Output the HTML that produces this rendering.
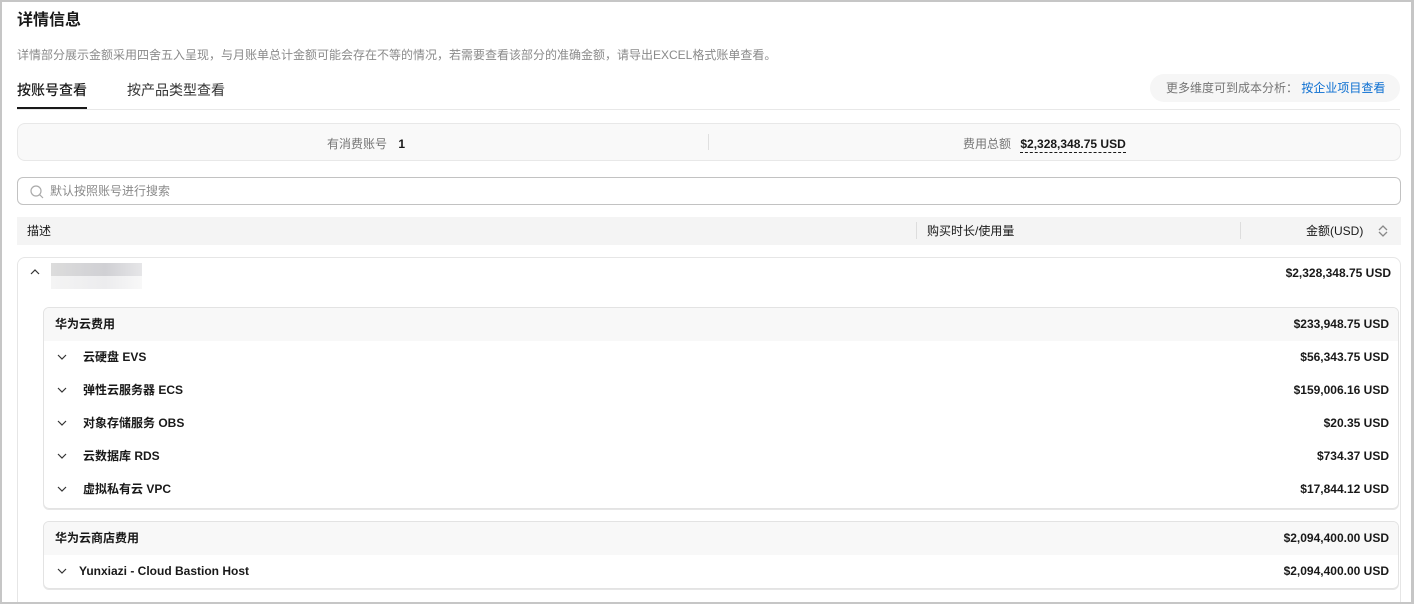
<!DOCTYPE html>
<html><head><meta charset="utf-8"><style>
*{box-sizing:border-box;margin:0;padding:0}
html,body{width:1414px;height:604px;overflow:hidden;background:#fff}
body{font-family:"Liberation Sans","Noto Sans CJK SC",sans-serif;color:#191919;position:relative}
.frame{position:absolute;left:0;top:0;width:1414px;height:604px;border:2px solid #c6c6c6;border-right-width:3px;pointer-events:none;z-index:5}
.abs{position:absolute}
.title{left:17px;top:10px;font-size:16px;font-weight:bold;line-height:22px}
.desc{left:17px;top:46px;font-size:12px;color:#8a8a8a;line-height:18px}
.tab{top:80px;font-size:14px;line-height:20px}
.ul{left:17px;top:107px;width:70px;height:3px;background:#191919}
.div{left:17px;top:109px;width:1383px;height:1px;background:#e8e8e8}
.pill{left:1150px;top:74px;width:250px;height:28px;border-radius:14px;background:#f6f6f6;font-size:12px;color:#757575;line-height:28px;padding-left:16px}
.pill span{color:#0a6ed1}
.sum{left:17px;top:123px;width:1384px;height:38px;border:1px solid #e8e8e8;border-radius:8px;background:#f9f9f9;font-size:12px;color:#757575}
.search{left:17px;top:177px;width:1384px;height:28px;border:1px solid #c2c2c2;border-radius:6px;font-size:12px;color:#8a8a8a;line-height:26px;padding-left:32px}
.th{left:17px;top:217px;width:1384px;height:28px;background:#f4f4f4;font-size:12px;line-height:28px;color:#191919}
.card{left:17px;top:257px;width:1384px;height:360px;border:1px solid #e6e6e6;border-radius:8px}
.in{left:43px;width:1356px;border:1px solid #e3e3e3;border-radius:6px;overflow:hidden;box-shadow:0 1px 0 #e6e6e6}
.row{position:relative;height:33px;font-size:12px;line-height:33px}
.row.h{background:#f8f8f8;padding-left:11px;font-weight:bold}
.row .r{position:absolute;right:9px;top:0;font-weight:bold}
.row .n{position:absolute;left:39px;font-weight:bold}
.chev{position:absolute;left:13px;top:12px}
</style></head><body>
<div class="frame"></div>
<div class="abs title">详情信息</div>
<div class="abs desc">详情部分展示金额采用四舍五入呈现，与月账单总计金额可能会存在不等的情况，若需要查看该部分的准确金额，请导出EXCEL格式账单查看。</div>
<div class="abs tab" style="left:17px;font-weight:500">按账号查看</div>
<div class="abs tab" style="left:127px;color:#333">按产品类型查看</div>
<div class="abs ul"></div><div class="abs div"></div>
<div class="abs pill">更多维度可到成本分析： <span>按企业项目查看</span></div>
<div class="abs sum">
 <div class="abs" style="left:309px;top:11px">有消费账号 <b style="color:#191919;margin-left:8px">1</b></div>
 <div class="abs" style="left:690px;top:10px;width:1px;height:16px;background:#e0e0e0"></div>
 <div class="abs" style="left:945px;top:11px">费用总额 <b style="color:#191919;margin-left:6px;border-bottom:1px dashed #191919;padding-bottom:1px">$2,328,348.75 USD</b></div>
</div>
<div class="abs search"><svg class="abs" style="left:12px;top:7px" width="14" height="14" viewBox="0 0 14 14"><circle cx="6" cy="6" r="5" fill="none" stroke="#aaa" stroke-width="1.2"/><path d="M9.8 9.8L13 13" stroke="#aaa" stroke-width="1.2"/></svg>默认按照账号进行搜索</div>
<div class="abs th">
 <span class="abs" style="left:10px">描述</span>
 <div class="abs" style="left:899px;top:5px;width:1px;height:17px;background:#ddd"></div>
 <span class="abs" style="left:910px">购买时长/使用量</span>
 <div class="abs" style="left:1223px;top:5px;width:1px;height:17px;background:#ddd"></div>
 <span class="abs" style="left:1289px">金额(USD)</span>
 <svg class="abs" style="left:1360px;top:7px" width="12" height="14" viewBox="0 0 12 14"><path d="M2 6L6 2L10 6M2 8L6 12L10 8" fill="none" stroke="#888" stroke-width="1.3"/></svg>
</div>
<div class="abs card">
 <svg class="abs" style="left:12px;top:10px" width="10" height="8" viewBox="0 0 10 8"><path d="M1 6L5 2L9 6" fill="none" stroke="#333" stroke-width="1.2"/></svg>
 <div class="abs" style="left:33px;top:5px;width:91px;height:13px;background:linear-gradient(90deg,#dcdcdc,#d0d0d4 60%,#e6e6e8)"></div>
 <div class="abs" style="left:33px;top:18px;width:91px;height:13px;background:linear-gradient(90deg,#f4f4f4,#ececee 60%,#f8f8f8)"></div>
 <div class="abs" style="right:9px;top:8px;font-size:12px;font-weight:bold">$2,328,348.75 USD</div>
</div>
<div class="abs in" style="top:307px;height:202px">
 <div class="row h">华为云费用<span class="r">$233,948.75 USD</span></div>
 <div class="row"><svg class="chev" width="10" height="8" viewBox="0 0 10 8"><path d="M1 2L5 6L9 2" fill="none" stroke="#333" stroke-width="1.2"/></svg><span class="n">云硬盘 EVS</span><span class="r">$56,343.75 USD</span></div>
 <div class="row"><svg class="chev" width="10" height="8" viewBox="0 0 10 8"><path d="M1 2L5 6L9 2" fill="none" stroke="#333" stroke-width="1.2"/></svg><span class="n">弹性云服务器 ECS</span><span class="r">$159,006.16 USD</span></div>
 <div class="row"><svg class="chev" width="10" height="8" viewBox="0 0 10 8"><path d="M1 2L5 6L9 2" fill="none" stroke="#333" stroke-width="1.2"/></svg><span class="n">对象存储服务 OBS</span><span class="r">$20.35 USD</span></div>
 <div class="row"><svg class="chev" width="10" height="8" viewBox="0 0 10 8"><path d="M1 2L5 6L9 2" fill="none" stroke="#333" stroke-width="1.2"/></svg><span class="n">云数据库 RDS</span><span class="r">$734.37 USD</span></div>
 <div class="row"><svg class="chev" width="10" height="8" viewBox="0 0 10 8"><path d="M1 2L5 6L9 2" fill="none" stroke="#333" stroke-width="1.2"/></svg><span class="n">虚拟私有云 VPC</span><span class="r">$17,844.12 USD</span></div>
</div>
<div class="abs in" style="top:521px;height:68px">
 <div class="row h">华为云商店费用<span class="r">$2,094,400.00 USD</span></div>
 <div class="row"><svg class="chev" width="10" height="8" viewBox="0 0 10 8"><path d="M1 2L5 6L9 2" fill="none" stroke="#333" stroke-width="1.2"/></svg><span class="n" style="left:35px">Yunxiazi - Cloud Bastion Host</span><span class="r">$2,094,400.00 USD</span></div>
</div>
</body></html>
